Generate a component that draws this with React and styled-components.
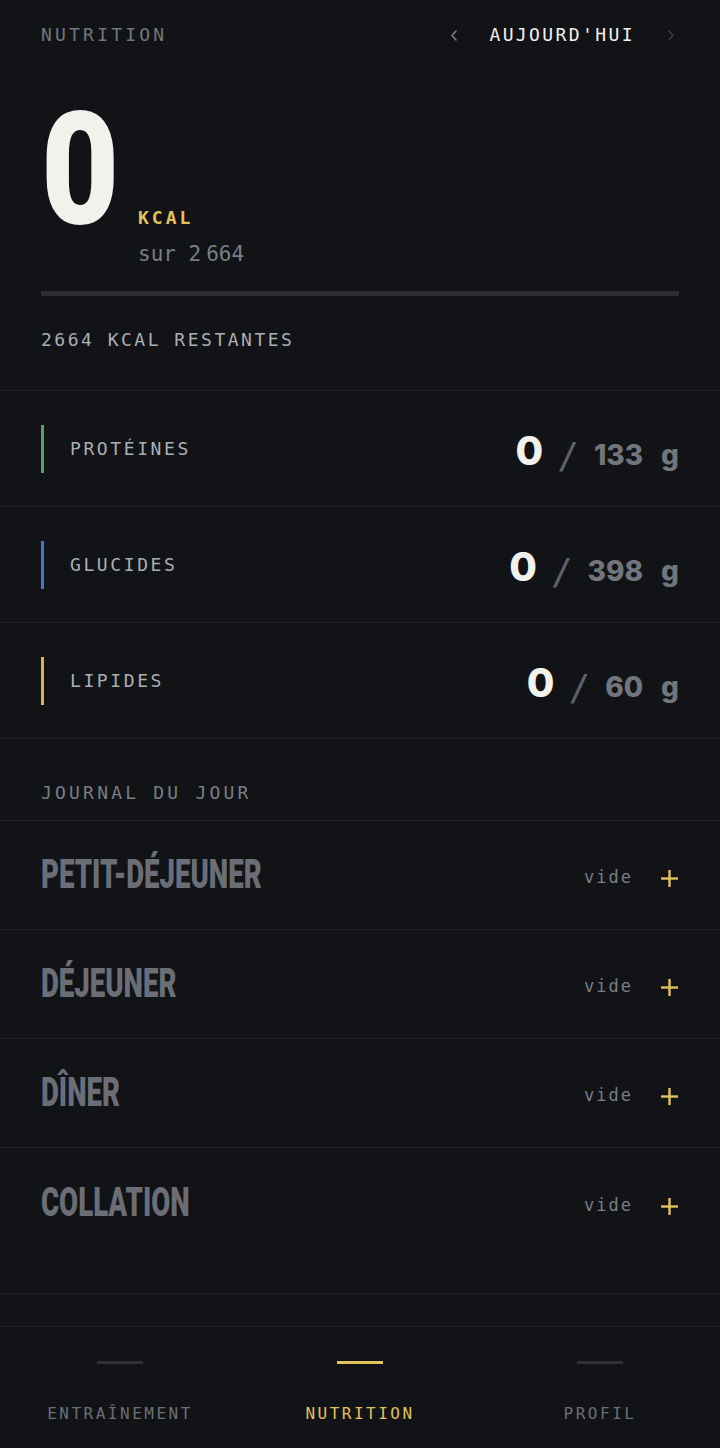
import React from "react";
import styled, { createGlobalStyle } from "styled-components";

const C = {
  bg: "#111317",
  line: "#1f2126",
  muted: "#73767d",
  label: "#acaeb3",
  white: "#f2f1ec",
  yellow: "#e2c25a",
  meal: "#6b6e76",
};

const mono = `"DejaVu Sans Mono", "Liberation Mono", monospace`;

const Global = createGlobalStyle`
  html, body { margin: 0; padding: 0; background: ${C.bg}; }
  * { box-sizing: border-box; }
`;

const Screen = styled.div`
  width: 720px;
  min-height: 1448px;
  background: ${C.bg};
  display: flex;
  flex-direction: column;
  font-family: ${mono};
  color: ${C.label};
`;

const Header = styled.header`
  height: 70px;
  padding: 0 41px;
  display: flex;
  align-items: center;
  justify-content: space-between;
`;

const SectionLabel = styled.div`
  font-size: 18px;
  line-height: 24px;
  letter-spacing: 3.2px;
  color: ${(p) => p.$color || C.muted};
  text-transform: uppercase;
`;

const DateNav = styled.div`
  display: flex;
  align-items: center;
`;

const Chevron = styled.button`
  background: none;
  border: 0;
  padding: 0;
  width: 10px;
  height: 14px;
  display: flex;
  align-items: center;
  justify-content: center;
  color: ${(p) => (p.$dim ? "#3a3d43" : "#7a7d84")};
  margin: ${(p) => (p.$dim ? "0 3px 0 31px" : "0 30px 0 0")};
`;

const DateLabel = styled.span`
  font-size: 18px;
  line-height: 24px;
  letter-spacing: 2.4px;
  color: ${C.white};
`;

const Hero = styled.section`
  display: grid;
  grid-template-columns: 97px 1fr;
  padding: 15px 41px 0;
`;

const BigNum = styled.div`
  font-family: Roboto, "DejaVu Sans", sans-serif;
  font-weight: 900;
  font-size: 157px;
  line-height: 169px;
  height: 169px;
  color: ${C.white};
  transform: scaleX(0.86);
  transform-origin: left center;
`;

const Side = styled.div`
  display: flex;
  flex-direction: column;
  padding-top: 122px;
`;

const Unit = styled.span`
  font-size: 18px;
  line-height: 22px;
  font-weight: 700;
  letter-spacing: 3px;
  color: ${C.yellow};
`;

const Goal = styled.span`
  margin-top: 13px;
  font-size: 21px;
  line-height: 24px;
  color: #7b7e85;
  display: flex;
`;

const Thin = styled.span`
  margin-left: 5px;
`;

const Track = styled.div`
  margin: 25px 41px 0;
  height: 5px;
  background: #2a2c31;
`;

const Remaining = styled.div`
  padding: 32px 41px 38px;
  font-size: 18px;
  line-height: 24px;
  letter-spacing: 2.5px;
  color: ${C.label};
`;

const MacroList = styled.div`
  border-top: 1px solid ${C.line};
`;

const MacroRow = styled.div`
  height: 116px;
  border-bottom: 1px solid ${C.line};
  padding: 0 41px;
  display: flex;
  align-items: center;
  justify-content: space-between;
`;

const MacroName = styled.div`
  display: flex;
  align-items: center;
  gap: 26px;
  font-size: 18px;
  letter-spacing: 2.6px;
  color: ${C.label};
`;

const Accent = styled.span`
  width: 3px;
  height: 48px;
  background: ${(p) => p.$color};
`;

const MacroValue = styled.div`
  display: flex;
  align-items: baseline;
  font-family: Inter, "DejaVu Sans", sans-serif;
  font-weight: 700;
  margin-top: 4px;
`;

const Current = styled.span`
  font-size: 40px;
  font-weight: 800;
  color: ${C.white};
  margin-right: 14px;
`;

const Slash = styled.span`
  font-family: ${mono};
  font-size: 36px;
  font-weight: 400;
  color: #5e6168;
  margin-right: 15px;
  transform: translateY(3px);
`;

const Target = styled.span`
  font-size: 28px;
  font-weight: 800;
  color: #72757c;
  margin-right: ${(p) => p.$gap || 0}px;
`;

const JournalHead = styled.div`
  padding: 42px 41px 15px;
`;

const MealList = styled.div`
  border-top: 1px solid ${C.line};
`;

const MealRow = styled.div`
  height: 109px;
  padding: 0 42px 0 41px;
  display: flex;
  align-items: center;
  justify-content: space-between;
  border-bottom: ${(p) => (p.$last ? "none" : `1px solid ${C.line}`)};
`;

const MealName = styled.span`
  display: inline-block;
  font-family: Roboto, "DejaVu Sans", sans-serif;
  font-weight: 900;
  font-size: 40px;
  line-height: 48px;
  color: ${C.meal};
  transform: scaleX(0.69);
  transform-origin: left center;
  white-space: nowrap;
`;

const MealSide = styled.div`
  display: flex;
  align-items: center;
  gap: 28px;
  margin-top: 4px;
`;

const Empty = styled.span`
  font-size: 17px;
  letter-spacing: 2px;
  color: #7a7d84;
`;

const AddBtn = styled.button`
  background: none;
  border: 0;
  padding: 0;
  width: 17px;
  height: 17px;
  margin-top: 3px;
  display: flex;
  color: ${C.yellow};
`;

const Spacer = styled.div`
  margin-top: 36px;
  height: 33px;
  border-top: 1px solid ${C.line};
`;

const Nav = styled.nav`
  margin-top: auto;
  height: 122px;
  border-top: 1px solid ${C.line};
  display: grid;
  grid-template-columns: repeat(3, 1fr);
`;

const Tab = styled.div`
  display: flex;
  flex-direction: column;
  align-items: center;
  padding-top: 34px;
`;

const TabBar = styled.span`
  width: 46px;
  height: 3px;
  background: ${(p) => (p.$active ? C.yellow : "#2f3136")};
`;

const TabLabel = styled.span`
  margin-top: 40px;
  font-size: 16px;
  line-height: 20px;
  letter-spacing: 2.5px;
  color: ${(p) => (p.$active ? C.yellow : "#6c6f76")};
`;

const ChevronIcon = ({ dir }) => (
  <svg width="8" height="11" viewBox="0 0 8 11" fill="none">
    <polyline
      points={dir === "left" ? "6,1 2,5.5 6,10" : "2,1 6,5.5 2,10"}
      stroke="currentColor"
      strokeWidth="1.6"
      strokeLinecap="round"
      strokeLinejoin="round"
    />
  </svg>
);

const PlusIcon = () => (
  <svg width="17" height="17" viewBox="0 0 17 17">
    <rect x="7.3" y="0" width="2.4" height="17" fill="currentColor" />
    <rect x="0" y="7.3" width="17" height="2.4" fill="currentColor" />
  </svg>
);

const macros = [
  { name: "PROTÉINES", color: "#5f9c6c", cur: 0, target: 133 },
  { name: "GLUCIDES", color: "#4a72c6", cur: 0, target: 398 },
  { name: "LIPIDES", color: "#d8b44c", cur: 0, target: 60 },
];

const meals = ["PETIT-DÉJEUNER", "DÉJEUNER", "DÎNER", "COLLATION"];

const tabs = [
  { label: "ENTRAÎNEMENT" },
  { label: "NUTRITION", active: true },
  { label: "PROFIL" },
];

export default function App() {
  return (
    <Screen>
      <Global />
      <Header>
        <SectionLabel>Nutrition</SectionLabel>
        <DateNav>
          <Chevron aria-label="Jour précédent">
            <ChevronIcon dir="left" />
          </Chevron>
          <DateLabel>AUJOURD'HUI</DateLabel>
          <Chevron $dim aria-label="Jour suivant">
            <ChevronIcon dir="right" />
          </Chevron>
        </DateNav>
      </Header>

      <Hero>
        <BigNum>0</BigNum>
        <Side>
          <Unit>KCAL</Unit>
          <Goal>
            sur 2<Thin>664</Thin>
          </Goal>
        </Side>
      </Hero>
      <Track />
      <Remaining>2664 KCAL RESTANTES</Remaining>

      <MacroList>
        {macros.map((m) => (
          <MacroRow key={m.name}>
            <MacroName>
              <Accent $color={m.color} />
              {m.name}
            </MacroName>
            <MacroValue>
              <Current>{m.cur}</Current>
              <Slash>/</Slash>
              <Target $gap={18}>{m.target}</Target>
              <Target>g</Target>
            </MacroValue>
          </MacroRow>
        ))}
      </MacroList>

      <JournalHead>
        <SectionLabel $color="#7a7d84">Journal du jour</SectionLabel>
      </JournalHead>

      <MealList>
        {meals.map((meal, i) => (
          <MealRow key={meal} $last={i === meals.length - 1}>
            <MealName>{meal}</MealName>
            <MealSide>
              <Empty>vide</Empty>
              <AddBtn aria-label={`Ajouter ${meal}`}>
                <PlusIcon />
              </AddBtn>
            </MealSide>
          </MealRow>
        ))}
      </MealList>
      <Spacer />

      <Nav>
        {tabs.map((t) => (
          <Tab key={t.label}>
            <TabBar $active={t.active} />
            <TabLabel $active={t.active}>{t.label}</TabLabel>
          </Tab>
        ))}
      </Nav>
    </Screen>
  );
}
